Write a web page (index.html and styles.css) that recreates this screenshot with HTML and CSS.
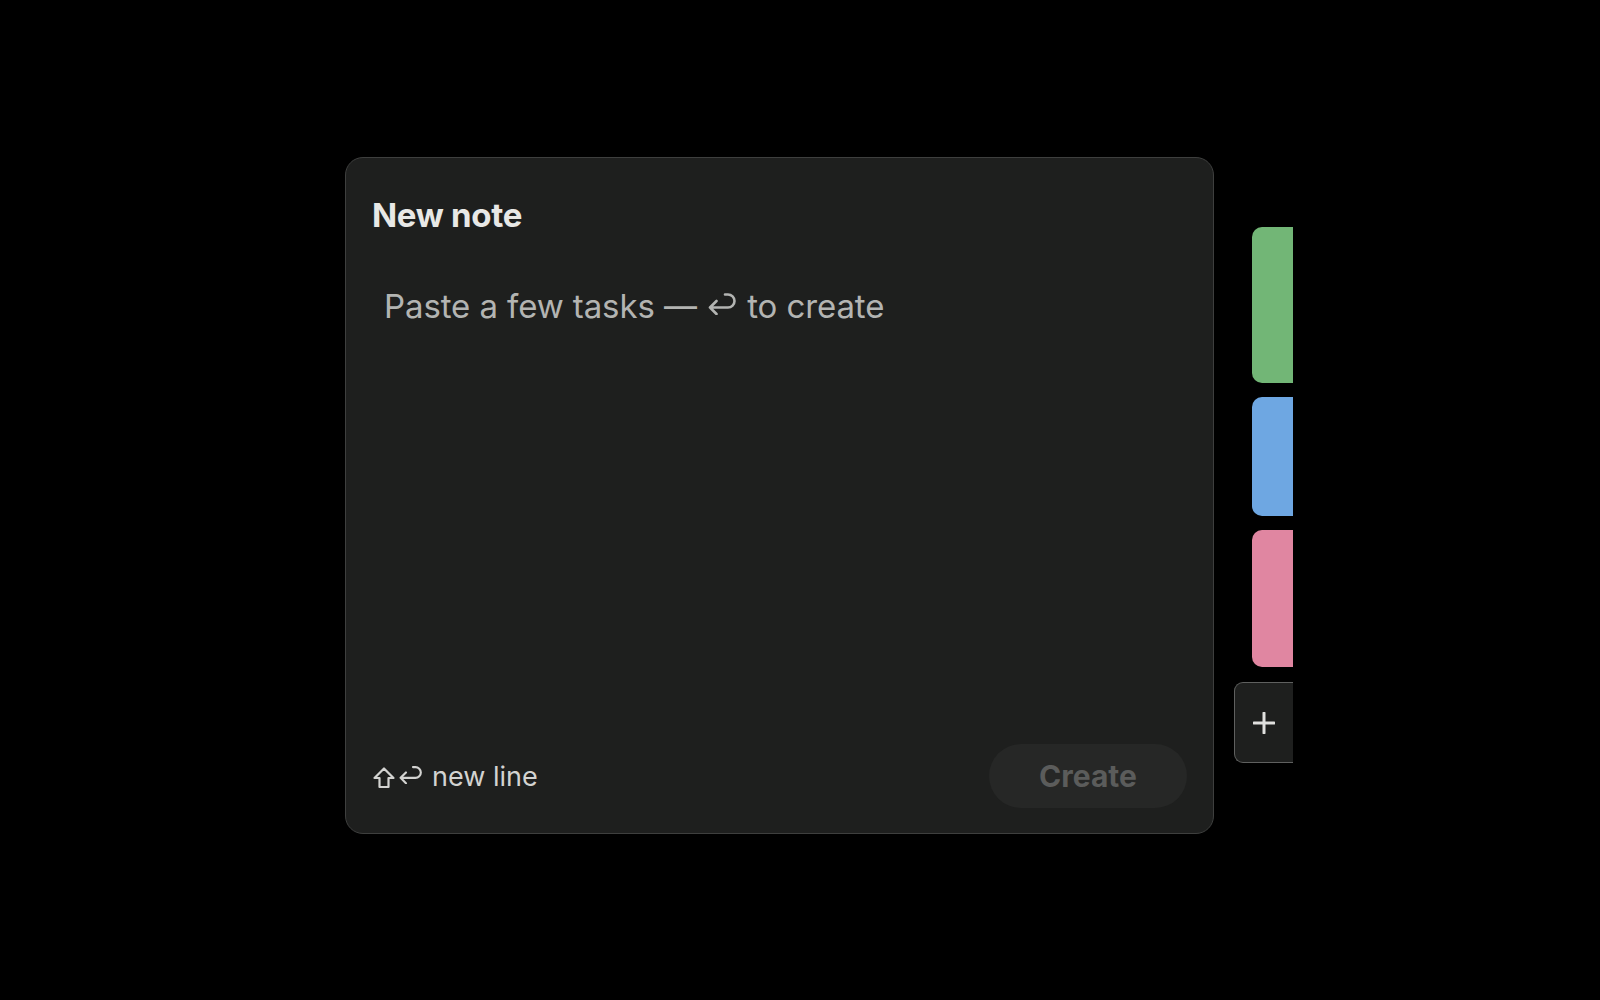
FILE: index.html
```html
<!DOCTYPE html>
<html lang="en">
<head>
<meta charset="utf-8">
<title>New note</title>
<link rel="stylesheet" href="styles.css">
</head>
<body>
<div class="stage">
  <section class="card">
    <h1 class="title">New note</h1>
    <div class="editor">
      <span class="placeholder">Paste a few tasks — <svg class="ret" viewBox="0 0 30 23" aria-hidden="true"><path d="M18 2.5H21A6.5 6.5 0 0 1 21 15.5H3M9.5 9L3 15.5L9.5 22"/></svg> to create</span>
    </div>
    <footer class="footer">
      <span class="hint"><svg class="shift" viewBox="0 0 24 24" aria-hidden="true"><path d="M12 2.5L21.5 12H16.5V21H7.5V12H2.5Z"/></svg><svg class="ret small" viewBox="0 0 30 23" aria-hidden="true"><path d="M18 2.5H21A6.5 6.5 0 0 1 21 15.5H3M9.5 9L3 15.5L9.5 22"/></svg><span class="hint-text">new line</span></span>
      <button class="create" type="button">Create</button>
    </footer>
  </section>
  <nav class="tabs">
    <div class="tab green"></div>
    <div class="tab blue"></div>
    <div class="tab pink"></div>
    <div class="tab add"><svg class="plus" viewBox="0 0 22 22" aria-hidden="true"><path d="M11 1V21M1 11H21"/></svg></div>
  </nav>
</div>
</body>
</html>
```
FILE: styles.css
```css
html, body {
  margin: 0;
  padding: 0;
  background: #000;
  width: 1600px;
  height: 1000px;
  overflow: hidden;
  font-family: Inter, "Liberation Sans", sans-serif;
}

.stage {
  display: flex;
  align-items: flex-start;
  padding: 157px 0 0 345px;
}

.card {
  box-sizing: border-box;
  width: 869px;
  height: 677px;
  background: #1e1f1e;
  border: 1.5px solid #3e3f3e;
  border-radius: 18px;
  padding: 36px 26px 25px 26px;
  display: flex;
  flex-direction: column;
}

.title {
  margin: 0;
  font-size: 33px;
  line-height: 42px;
  font-weight: 700;
  color: #e8e8e6;
  letter-spacing: -0.3px;
}

.editor {
  flex: 1;
  padding: 48px 0 0 12px;
}

.placeholder {
  font-size: 33px;
  line-height: 44px;
  color: #b3b4b2;
  font-weight: 400;
  letter-spacing: -0.1px;
}

.ret {
  width: 30px;
  height: 23px;
  fill: none;
  stroke: currentColor;
  stroke-width: 2.6;
  stroke-linecap: round;
  stroke-linejoin: round;
  vertical-align: 3px;
  margin: 0 1px;
}

.footer {
  display: flex;
  align-items: center;
  justify-content: space-between;
}

.hint {
  display: flex;
  align-items: center;
  font-size: 27px;
  color: #d3d3d1;
  font-weight: 400;
}

.shift {
  width: 24px;
  height: 24px;
  fill: none;
  stroke: currentColor;
  stroke-width: 2.2;
  stroke-linejoin: round;
  margin-top: 3px;
}

.ret.small {
  width: 25px;
  height: 19px;
  margin: 0 0 4px 2px;
}

.hint-text {
  margin-left: 9px;
}

.create {
  width: 198px;
  height: 64px;
  border: none;
  border-radius: 32px;
  background: #262726;
  color: #5b5c5b;
  font-family: Inter, "Liberation Sans", sans-serif;
  font-size: 30px;
  font-weight: 700;
}

.tabs {
  width: 79px;
  margin-top: 70px;
  display: flex;
  flex-direction: column;
  align-items: flex-end;
  gap: 14px;
}

.tab {
  width: 41px;
  border-radius: 10px 0 0 10px;
}

.green { height: 156px; background: #72b676; }
.blue { height: 119px; background: #6ea7e2; }
.pink { height: 137px; background: #e086a1; }

.add {
  box-sizing: border-box;
  width: 59px;
  height: 81px;
  margin-top: 1px;
  background: #1e1f1e;
  border: 1.5px solid #5f605f;
  border-right: none;
  border-radius: 9px 0 0 9px;
  display: flex;
  align-items: center;
  justify-content: center;
}

.plus {
  width: 22px;
  height: 22px;
  fill: none;
  stroke: #e0e0de;
  stroke-width: 3;
  stroke-linecap: round;
}
```
